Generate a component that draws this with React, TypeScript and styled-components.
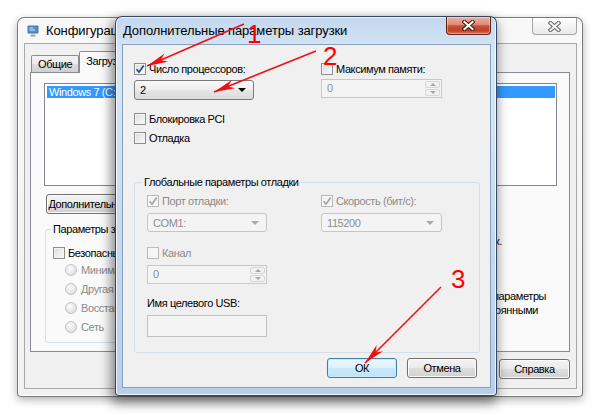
import React from 'react';
import styled, { createGlobalStyle, css } from 'styled-components';

const GlobalStyle = createGlobalStyle`
  html, body { margin: 0; padding: 0; background: #ffffff; }
  #root { width: 600px; height: 414px; }
`;

const Desktop = styled.div`
  position: relative;
  width: 600px;
  height: 414px;
  overflow: hidden;
  background: #ffffff;
  font-family: "Liberation Sans", Arial, sans-serif;
  font-size: 11px;
  letter-spacing: -0.4px;
  color: #000;
`;

// windows sit on the desktop at their own coordinates
const WindowFrame = styled.div<{ $x: number; $y: number; $w: number; $h: number; $active?: boolean }>`
  position: absolute;
  left: ${p => p.$x}px;
  top: ${p => p.$y}px;
  width: ${p => p.$w}px;
  height: ${p => p.$h}px;
  z-index: ${p => p.$active ? 2 : 1};
  box-sizing: border-box;
  display: flex;
  flex-direction: column;
  padding: 0 5px 7px 6px;
  border-radius: 7px 7px 4px 4px;
  ${p => p.$active ? css`
    border: 1px solid rgba(40, 55, 80, 0.9);
    background: linear-gradient(180deg, #c2d7ee 0%, #d8e7f7 10%, #c6dbf0 55%, #b7cfea 100%);
    box-shadow: inset 0 0 0 1px rgba(255,255,255,0.75), -2px 5px 12px 2px rgba(0,0,0,0.45);
  ` : css`
    border: 1px solid rgba(100, 100, 100, 0.85);
    background: linear-gradient(180deg, #f8f8f8 0%, #f1f1f1 100%);
    box-shadow: inset 0 0 0 1px rgba(255,255,255,0.9), 0 3px 9px rgba(0,0,0,0.3);
  `}
`;

const TitleBar = styled.div<{ $h: number; $pad: number }>`
  height: ${p => p.$h}px;
  flex: none;
  display: flex;
  justify-content: space-between;
  align-items: flex-start;
  padding-left: ${p => p.$pad}px;
`;

const TitleLeft = styled.div<{ $h: number }>`
  height: ${p => p.$h}px;
  display: flex;
  align-items: center;
  gap: 7px;
`;

const TitleText = styled.span`
  font-size: 13px;
  letter-spacing: -0.1px;
  color: #000;
  white-space: nowrap;
`;

const CloseButton = styled.div<{ $active?: boolean }>`
  width: 45px;
  height: 17px;
  box-sizing: border-box;
  display: flex;
  align-items: center;
  justify-content: center;
  border-radius: 0 0 4px 4px;
  ${p => p.$active ? css`
    height: 18px;
    border: 1px solid #5e2218;
    border-top: none;
    background: linear-gradient(180deg, #eab2a4 0%, #dc8a76 45%, #c84f35 52%, #c14128 80%, #d9735c 100%);
    box-shadow: inset 0 0 0 1px rgba(255,255,255,0.35);
  ` : css`
    border: 1px solid #a4a4a4;
    border-top: none;
    background: linear-gradient(180deg, #ffffff 0%, #f3f3f3 55%, #e9e9e9 100%);
  `}
`;

const Client = styled.div<{ $active?: boolean }>`
  flex: 1;
  min-height: 0;
  display: flex;
  flex-direction: column;
  box-sizing: border-box;
  background: #f0f0f0;
  border: 1px solid ${p => p.$active ? '#86a0be' : '#a9a9a9'};
`;

/* ---------- common controls ---------- */

const CheckRow = styled.div<{ $mt?: number }>`
  display: flex;
  align-items: center;
  gap: 3px;
  height: 13px;
  margin-top: ${p => p.$mt ?? 0}px;
  white-space: nowrap;
`;

const Box = styled.span<{ $disabled?: boolean }>`
  width: 12px;
  height: 12px;
  box-sizing: border-box;
  flex: none;
  display: flex;
  align-items: center;
  justify-content: center;
  border: 1px solid ${p => p.$disabled ? '#b9b9b9' : '#8e8f8f'};
  background: ${p => p.$disabled ? '#f4f4f4' : 'linear-gradient(135deg, #d6d8db 0%, #eeeeee 55%, #fafafa 100%)'};
  box-shadow: inset 0 0 0 1px ${p => p.$disabled ? '#f7f7f7' : '#f3f3f3'};
`;

const Label = styled.span<{ $disabled?: boolean; $mt?: number }>`
  color: ${p => p.$disabled ? '#8b8b8b' : '#000'};
  line-height: 14px;
  margin-top: ${p => p.$mt ?? 0}px;
`;

const Check = ({ checked, disabled }: { checked?: boolean; disabled?: boolean }) => (
  <Box $disabled={disabled}>
    {checked && (
      <svg width="10" height="10" viewBox="0 0 10 10">
        <path d="M1.6 5.3 L4 8.2 L8.7 1.4" fill="none" stroke={disabled ? '#a6a6a6' : '#27457f'} strokeWidth="1.7" />
      </svg>
    )}
  </Box>
);

const RadioDot = styled.span`
  width: 12px;
  height: 12px;
  box-sizing: border-box;
  border-radius: 50%;
  flex: none;
  border: 1px solid #c2c2c2;
  background: radial-gradient(circle at 40% 35%, #fbfbfb 0%, #e6e6e6 60%, #d4d4d4 100%);
`;

const RadioRow = styled.div<{ $mt: number }>`
  display: flex;
  align-items: center;
  gap: 4px;
  height: 13px;
  margin: ${p => p.$mt}px 0 0 12px;
  color: #8b8b8b;
  white-space: nowrap;
`;

const ComboBox = styled.div<{ $w: number; $h: number; $mt: number; $disabled?: boolean }>`
  width: ${p => p.$w}px;
  height: ${p => p.$h}px;
  margin-top: ${p => p.$mt}px;
  box-sizing: border-box;
  display: flex;
  align-items: center;
  justify-content: space-between;
  padding: 0 7px 0 5px;
  border-radius: 3px;
  ${p => p.$disabled ? css`
    border: 1px solid #c3c6c9;
    background: #f4f4f4;
    color: #8d8d8d;
  ` : css`
    border: 1px solid #7a7a7a;
    background: linear-gradient(180deg, #f8f8f8 0%, #efefef 45%, #e4e4e4 55%, #dcdcdc 100%);
    color: #000;
  `}
`;

const DropArrow = styled.span<{ $disabled?: boolean }>`
  width: 0;
  height: 0;
  border-left: 4px solid transparent;
  border-right: 4px solid transparent;
  border-top: 4px solid ${p => p.$disabled ? '#a9a9a9' : '#000'};
`;

const Combo = ({ value, w, h, mt, disabled }: { value: string; w: number; h: number; mt: number; disabled?: boolean }) => (
  <ComboBox $w={w} $h={h} $mt={mt} $disabled={disabled}>
    <span>{value}</span>
    <DropArrow $disabled={disabled} />
  </ComboBox>
);

const SpinBox = styled.div<{ $w: number; $mt: number }>`
  width: ${p => p.$w}px;
  height: 19px;
  margin-top: ${p => p.$mt}px;
  box-sizing: border-box;
  display: flex;
  border: 1px solid #c6c9cc;
  background: #f4f4f4;
  color: #8d8d8d;
`;

const SpinValue = styled.span`
  flex: 1;
  padding-left: 5px;
  line-height: 17px;
`;

const SpinButtons = styled.div`
  width: 15px;
  display: flex;
  flex-direction: column;
  gap: 1px;
  padding: 1px;
`;

const SpinPart = styled.span<{ $up?: boolean }>`
  flex: 1;
  display: flex;
  align-items: center;
  justify-content: center;
  border: 1px solid #d6d6d6;
  border-radius: 2px;
  background: #f2f2f2;
  &::after {
    content: '';
    width: 0;
    height: 0;
    border-left: 3px solid transparent;
    border-right: 3px solid transparent;
    ${p => p.$up ? 'border-bottom: 3px solid #a8a8a8;' : 'border-top: 3px solid #a8a8a8;'}
  }
`;

const Spin = ({ value, w, mt }: { value: string; w: number; mt: number }) => (
  <SpinBox $w={w} $mt={mt}>
    <SpinValue>{value}</SpinValue>
    <SpinButtons>
      <SpinPart $up />
      <SpinPart />
    </SpinButtons>
  </SpinBox>
);

const TextBox = styled.div<{ $w: number; $h: number; $mt: number }>`
  width: ${p => p.$w}px;
  height: ${p => p.$h}px;
  margin-top: ${p => p.$mt}px;
  box-sizing: border-box;
  border: 1px solid #bfc2c5;
  background: #f4f4f4;
`;

const PushButton = styled.div<{ $w: number; $default?: boolean; $mt?: number; $ml?: number }>`
  width: ${p => p.$w}px;
  height: 20px;
  margin-top: ${p => p.$mt ?? 0}px;
  margin-left: ${p => p.$ml ?? 0}px;
  box-sizing: border-box;
  flex: none;
  display: flex;
  align-items: center;
  justify-content: center;
  border-radius: 3px;
  white-space: nowrap;
  overflow: hidden;
  ${p => p.$default ? css`
    border: 1px solid #3c7fb1;
    background: linear-gradient(180deg, #eef8fe 0%, #e0f1fc 48%, #cbe8fa 52%, #bfe2f8 100%);
    box-shadow: inset 0 0 0 1px #c6ebfc;
  ` : css`
    border: 1px solid #707070;
    background: linear-gradient(180deg, #f3f3f3 0%, #ebebeb 48%, #dddddd 52%, #d1d1d1 100%);
    box-shadow: inset 0 0 0 1px #fbfbfb;
  `}
`;

const Group = styled.fieldset<{ $w?: number; $mt: number; $pad: string }>`
  margin: ${p => p.$mt}px 0 0 0;
  padding: ${p => p.$pad};
  min-width: 0;
  width: ${p => p.$w ? `${p.$w}px` : 'auto'};
  box-sizing: border-box;
  border: 1px solid #d5dfe5;
  border-radius: 3px;
`;

const GroupTitle = styled.legend<{ $ml: number }>`
  margin-left: ${p => p.$ml}px;
  padding: 0 2px;
  line-height: 14px;
  color: #000;
  white-space: nowrap;
`;

/* ---------- back window: msconfig ---------- */

const TabStrip = styled.div`
  display: flex;
  align-items: flex-end;
  padding: 7px 0 0 6px;
  margin-bottom: -1px;
  position: relative;
  z-index: 1;
`;

const Tab = styled.div<{ $selected?: boolean }>`
  box-sizing: border-box;
  padding: 0 6px;
  white-space: nowrap;
  border: 1px solid #898c95;
  border-bottom: none;
  border-radius: 2px 2px 0 0;
  ${p => p.$selected ? css`
    width: 70px;
    height: 22px;
    line-height: 18px;
    background: #fafafa;
  ` : css`
    height: 17px;
    line-height: 17px;
    margin-bottom: 1px;
    background: linear-gradient(180deg, #f2f2f2 0%, #ebebeb 50%, #dddddd 51%, #cfcfcf 100%);
  `}
`;

const TabPanel = styled.div`
  height: 280px;
  box-sizing: border-box;
  margin: 0 6px 0 5px;
  padding: 10px 12px 0 13px;
  border: 1px solid #898c95;
  background: #fafafa;
  display: flex;
  flex-direction: column;
`;

const ListBox = styled.div`
  height: 103px;
  box-sizing: border-box;
  border: 1px solid #828790;
  background: #ffffff;
  padding: 2px 1px 2px 2px;
`;

const ListItem = styled.div<{ $selected?: boolean }>`
  height: 12px;
  line-height: 12px;
  padding-left: 2px;
  white-space: nowrap;
  overflow: hidden;
  background: ${p => p.$selected ? '#3399ff' : 'transparent'};
  color: ${p => p.$selected ? '#ffffff' : '#000'};
`;

const LowerRow = styled.div`
  display: flex;
  align-items: flex-start;
  margin-left: 1px;
`;

const SideColumn = styled.div`
  display: flex;
  flex-direction: column;
  margin: 18px 0 0 20px;
`;

const TimeoutRow = styled.div`
  display: flex;
  align-items: center;
  gap: 5px;
  height: 18px;
`;

const TimeoutInput = styled.div`
  width: 62px;
  height: 18px;
  box-sizing: border-box;
  border: 1px solid #abadb3;
  background: #ffffff;
`;

const KeepRow = styled.div`
  display: flex;
  align-items: flex-start;
  gap: 3px;
  margin-top: 39px;
`;

const WrapLabel = styled.span`
  width: 118px;
  line-height: 14px;
`;

const BackButtons = styled.div`
  display: flex;
  justify-content: flex-end;
  gap: 7px;
  padding: 7px 6px 0 0;
`;

/* ---------- front window: advanced boot options ---------- */

const DialogBody = styled.div`
  flex: 1;
  display: flex;
  flex-direction: column;
  padding: 17px 10px 9px 11px;
`;

const TwoColumns = styled.div<{ $first: number }>`
  display: grid;
  grid-template-columns: ${p => p.$first}px 1fr;
  align-items: start;
`;

const Column = styled.div`
  display: flex;
  flex-direction: column;
`;

const DialogButtons = styled.div`
  margin-top: auto;
  display: flex;
  justify-content: flex-end;
  gap: 10px;
  padding-right: 3px;
`;

/* ---------- annotations drawn over everything ---------- */

const Overlay = styled.svg`
  position: absolute;
  left: 0;
  top: 0;
  width: 600px;
  height: 414px;
  pointer-events: none;
  z-index: 10;
`;

const CloseGlyph = ({ active }: { active?: boolean }) => (
  <svg width="13" height="11" viewBox="0 0 13 11">
    <path d="M2.5 2 L10.5 9 M10.5 2 L2.5 9" stroke={active ? '#4a1a12' : '#6b6b6b'} strokeWidth="4.2" strokeLinecap="square" />
    <path d="M2.5 2 L10.5 9 M10.5 2 L2.5 9" stroke={active ? '#ffffff' : '#f4f4f4'} strokeWidth="2" strokeLinecap="square" />
  </svg>
);

const AppIcon = () => (
  <svg width="12" height="12" viewBox="0 0 12 12">
    <rect x="0.5" y="0.5" width="11" height="8" rx="1" fill="#5f6f86" />
    <rect x="1.5" y="1.5" width="9" height="6" fill="#4f8fd8" />
    <path d="M2.5 3 L6 3 M2.5 5 L8 5" stroke="#cfe6ff" strokeWidth="1" />
    <path d="M4 9.5 L8 9.5 L9 11.5 L3 11.5 Z" fill="#9aa3ad" />
  </svg>
);

const arrowHead = (x1: number, y1: number, x2: number, y2: number) => {
  const dx = x2 - x1;
  const dy = y2 - y1;
  const len = Math.hypot(dx, dy);
  const ux = dx / len;
  const uy = dy / len;
  const px = -uy;
  const py = ux;
  const back = 21;
  const wide = 4.5;
  const notch = 15;
  const a = `${x2 - ux * back + px * wide},${y2 - uy * back + py * wide}`;
  const b = `${x2 - ux * notch},${y2 - uy * notch}`;
  const c = `${x2 - ux * back - px * wide},${y2 - uy * back - py * wide}`;
  return `${x2},${y2} ${a} ${b} ${c}`;
};

const arrows = [
  { x1: 244, y1: 24, x2: 147, y2: 66 },
  { x1: 316, y1: 51, x2: 214, y2: 92 },
  { x1: 441, y1: 287, x2: 365, y2: 363 },
];

const marks = [
  { n: '1', x: 247, y: 43 },
  { n: '2', x: 323, y: 65 },
  { n: '3', x: 451, y: 288 },
];

export default function App() {
  return (
    <>
      <GlobalStyle />
      <Desktop>
        <WindowFrame $x={17} $y={17} $w={566} $h={380}>
          <TitleBar $h={25} $pad={3}>
            <TitleLeft $h={25}>
              <AppIcon />
              <TitleText>Конфигурация системы</TitleText>
            </TitleLeft>
            <CloseButton>
              <CloseGlyph />
            </CloseButton>
          </TitleBar>
          <Client>
            <TabStrip>
              <Tab>Общие</Tab>
              <Tab $selected>Загрузка</Tab>
            </TabStrip>
            <TabPanel>
              <ListBox>
                <ListItem $selected>Windows 7 (C:\)</ListItem>
              </ListBox>
              <PushButton $w={150} $mt={8} $ml={2}>Дополнительные параметры...</PushButton>
              <LowerRow>
                <Group $w={352} $mt={8} $pad="10px 0 9px 7px">
                  <GroupTitle $ml={-2}>Параметры загрузки</GroupTitle>
                  <CheckRow>
                    <Check />
                    <Label>Безопасный режим</Label>
                  </CheckRow>
                  <RadioRow $mt={4}><RadioDot />Минимальная</RadioRow>
                  <RadioRow $mt={6}><RadioDot />Другая оболочка</RadioRow>
                  <RadioRow $mt={6}><RadioDot />Восстановление</RadioRow>
                  <RadioRow $mt={6}><RadioDot />Сеть</RadioRow>
                </Group>
                <SideColumn>
                  <TimeoutRow>
                    <TimeoutInput />
                    <span>сек.</span>
                  </TimeoutRow>
                  <KeepRow>
                    <Check />
                    <WrapLabel>Сделать эти параметры загрузки постоянными</WrapLabel>
                  </KeepRow>
                </SideColumn>
              </LowerRow>
            </TabPanel>
            <BackButtons>
              <PushButton $w={71}>Справка</PushButton>
            </BackButtons>
          </Client>
        </WindowFrame>

        <WindowFrame $x={115} $y={16} $w={382} $h={380} $active>
          <TitleBar $h={27} $pad={1}>
            <TitleLeft $h={27}>
              <TitleText>Дополнительные параметры загрузки</TitleText>
            </TitleLeft>
            <CloseButton $active>
              <CloseGlyph active />
            </CloseButton>
          </TitleBar>
          <Client $active>
            <DialogBody>
              <TwoColumns $first={187}>
                <Column>
                  <CheckRow>
                    <Check checked />
                    <Label>Число процессоров:</Label>
                  </CheckRow>
                  <Combo value="2" w={120} h={20} mt={5} />
                </Column>
                <Column>
                  <CheckRow>
                    <Check />
                    <Label>Максимум памяти:</Label>
                  </CheckRow>
                  <Spin value="0" w={121} mt={4} />
                </Column>
              </TwoColumns>
              <CheckRow $mt={12}>
                <Check />
                <Label>Блокировка PCI</Label>
              </CheckRow>
              <CheckRow $mt={6}>
                <Check />
                <Label>Отладка</Label>
              </CheckRow>
              <Group $mt={31} $pad="5px 0 15px 12px">
                <GroupTitle $ml={-5}>Глобальные параметры отладки</GroupTitle>
                <TwoColumns $first={174}>
                  <Column>
                    <CheckRow>
                      <Check checked disabled />
                      <Label $disabled>Порт отладки:</Label>
                    </CheckRow>
                    <Combo value="COM1:" w={120} h={19} mt={6} disabled />
                    <CheckRow $mt={14}>
                      <Check disabled />
                      <Label $disabled>Канал</Label>
                    </CheckRow>
                    <Spin value="0" w={120} mt={6} />
                    <Label $mt={12}>Имя целевого USB:</Label>
                    <TextBox $w={120} $h={22} $mt={5} />
                  </Column>
                  <Column>
                    <CheckRow>
                      <Check checked disabled />
                      <Label $disabled>Скорость (бит/с):</Label>
                    </CheckRow>
                    <Combo value="115200" w={121} h={19} mt={6} disabled />
                  </Column>
                </TwoColumns>
              </Group>
              <DialogButtons>
                <PushButton $w={70} $default>ОК</PushButton>
                <PushButton $w={70}>Отмена</PushButton>
              </DialogButtons>
            </DialogBody>
          </Client>
        </WindowFrame>

        <Overlay viewBox="0 0 600 414">
          {arrows.map((a, i) => (
            <g key={i}>
              <line x1={a.x1} y1={a.y1} x2={a.x2} y2={a.y2} stroke="#ee1111" strokeWidth="1.6" />
              <polygon points={arrowHead(a.x1, a.y1, a.x2, a.y2)} fill="#ee1111" />
            </g>
          ))}
          {marks.map(m => (
            <text key={m.n} x={m.x} y={m.y} fill="#ff0000" fontSize="26" fontFamily="Liberation Sans, Arial, sans-serif">
              {m.n}
            </text>
          ))}
        </Overlay>
      </Desktop>
    </>
  );
}
